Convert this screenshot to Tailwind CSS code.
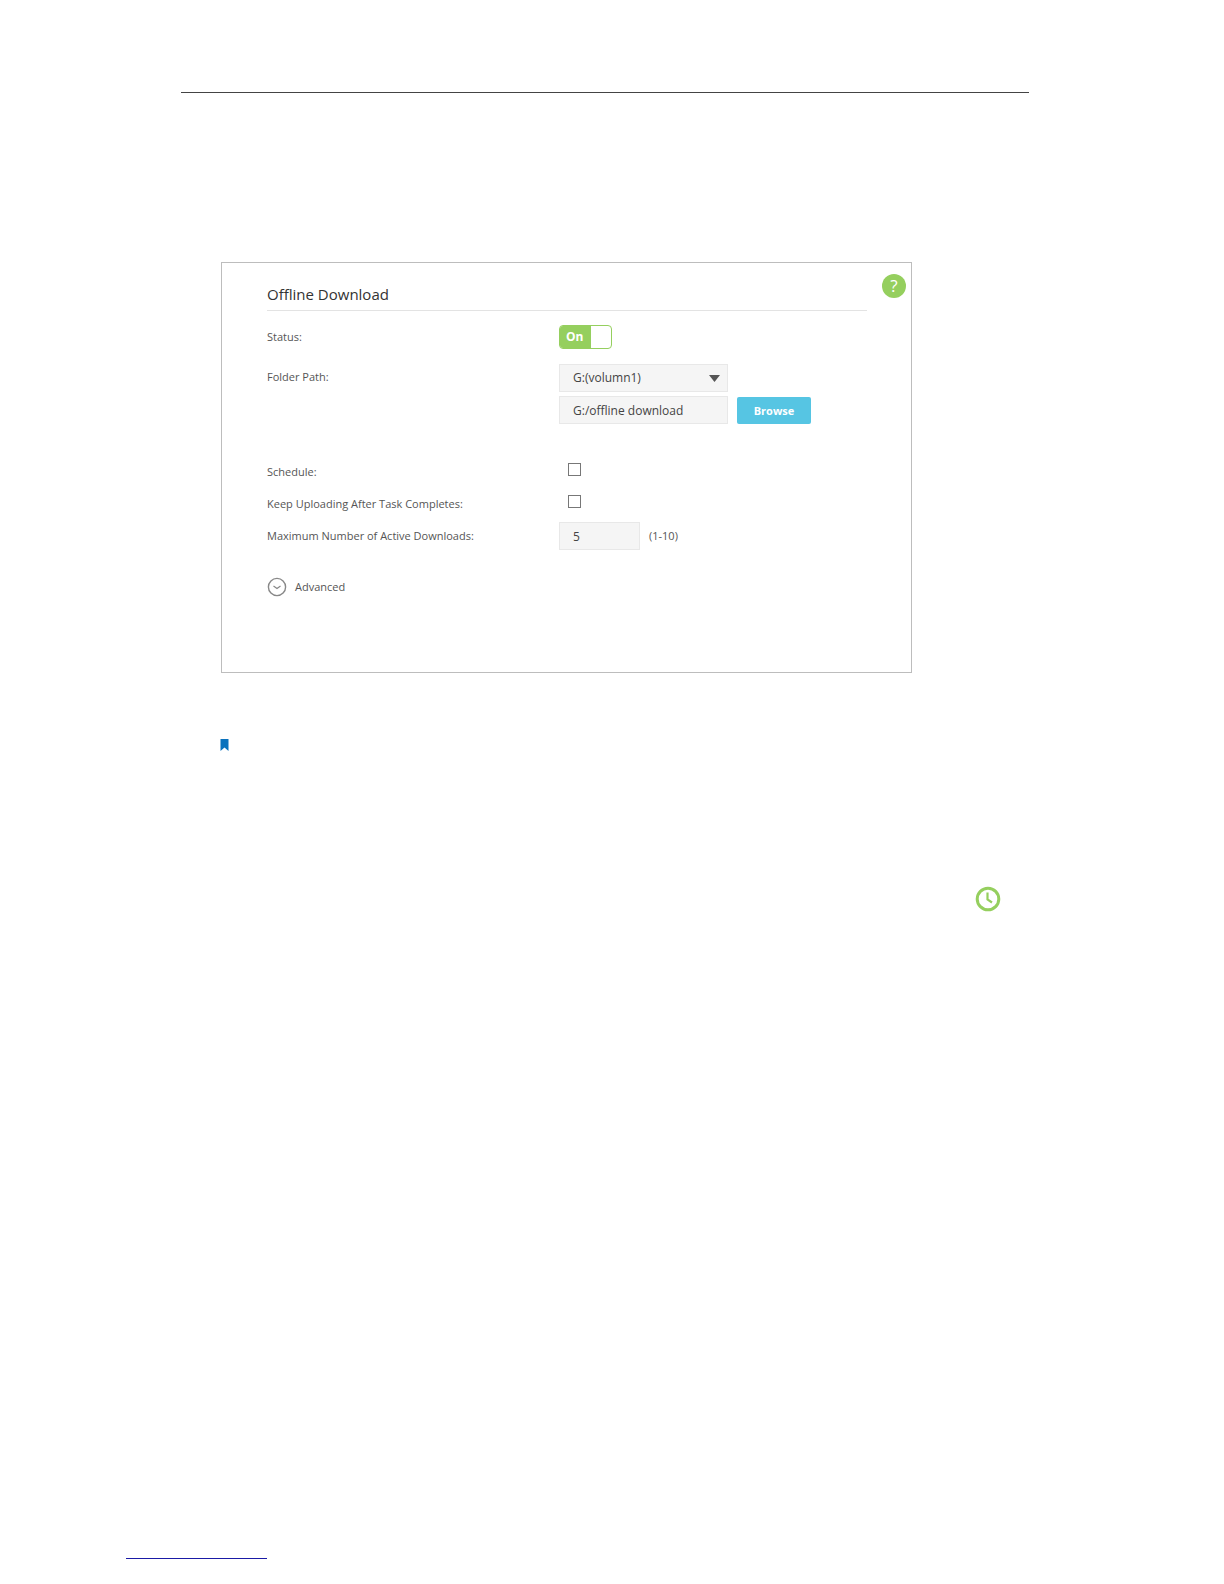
<!DOCTYPE html>
<html lang="en">
<head>
    <meta charset="UTF-8">
    <title>Offline Download</title>
    <script src="https://cdn.jsdelivr.net/npm/@tailwindcss/browser@4"></script>
</head>
<body class="bg-white h-[1584px] overflow-hidden font-['Open_Sans','Noto_Sans',sans-serif] text-[#555]">
    <div class="pt-[92px] pl-[181px]">
        <!-- Header rule -->
        <div class="w-[848px] h-px bg-[#444]"></div>

        <!-- Settings panel -->
        <div class="relative ml-[40px] mt-[169px] w-[691px] h-[411px] border border-[#bdbdbd] pl-[45px] pt-[19px]">
            <div class="absolute right-[5px] top-[11px] w-[24px] h-[24px] rounded-full bg-[#95cf5e] text-white text-[17px] leading-[24px] text-center">?</div>

            <div class="w-[600px] h-[29px] border-b border-[#e3e3e3] text-[15px] leading-[24px] text-[#333]">Offline Download</div>

            <div class="flex items-center mt-[14px] h-[24px] text-[11px]">
                <div class="w-[292px]">Status:</div>
                <div class="flex w-[53px] h-[24px] rounded-[4px] border border-[#95cf5e] overflow-hidden">
                    <div class="w-[31px] bg-[#95cf5e] text-white font-bold text-[12px] leading-[22px] pl-[6px]">On</div>
                </div>
            </div>

            <div class="flex mt-[15px] text-[11px]">
                <div class="w-[292px] pt-[5px]">Folder Path:</div>
                <div class="flex flex-col gap-[4px]">
                    <div class="flex items-center justify-between w-[169px] h-[28px] bg-[#f5f5f5] border border-[#e8e8e8] pl-[13px] pr-[7px] text-[12px] text-[#444]">
                        G:(volumn1)
                        <svg width="11" height="7" viewBox="0 0 11 7"><path d="M0 0h11L5.500 7z" fill="#555"/></svg>
                    </div>
                    <div class="flex items-center gap-[9px]">
                        <div class="w-[169px] h-[28px] bg-[#f5f5f5] border border-[#e8e8e8] pl-[13px] text-[12px] leading-[27px] text-[#444]">G:/offline download</div>
                        <div class="w-[74px] h-[27px] rounded-[2px] bg-[#56c5e3] text-white font-bold text-[11px] leading-[27px] text-center">Browse</div>
                    </div>
                </div>
            </div>

            <div class="flex items-center mt-[36px] h-[24px] text-[11px]">
                <div class="w-[292px]">Schedule:</div>
                <div class="ml-[9px] mb-[6px] w-[13px] h-[13px] border border-[#777] bg-white"></div>
            </div>
            <div class="flex items-center mt-[8px] h-[24px] text-[11px]">
                <div class="w-[292px]">Keep Uploading After Task Completes:</div>
                <div class="ml-[9px] mb-[6px] w-[13px] h-[13px] border border-[#777] bg-white"></div>
            </div>
            <div class="flex items-center mt-[6px] h-[28px] text-[11px]">
                <div class="w-[292px]">Maximum Number of Active Downloads:</div>
                <div class="w-[81px] h-[28px] bg-[#f5f5f5] border border-[#e8e8e8] pl-[13px] text-[12px] leading-[27px] text-[#444]">5</div>
                <div class="ml-[9px]">(1-10)</div>
            </div>

            <div class="flex items-center gap-[8px] mt-[27px] text-[11px]">
                <svg width="20" height="20" viewBox="0 0 20 20" fill="none" stroke="#888"><circle cx="10" cy="10" r="8.600" stroke-width="1.400"/><path d="M6.500 9l3.500 2.500L13.500 9" stroke-width="1.200"/></svg>
                Advanced
            </div>
        </div>

        <!-- Note bookmark -->
        <svg class="ml-[39px] mt-[66px]" width="9" height="12" viewBox="0 0 9 12"><path d="M0.500 0h8v12L4.500 8.500 0.500 12z" fill="#0a72bd"/></svg>

        <!-- Clock icon -->
        <svg class="ml-[794px] mt-[135px]" width="26" height="26" viewBox="0 0 26 26" fill="none" stroke="#95cf5e"><circle cx="13" cy="13" r="10.800" stroke-width="3"/><path d="M12.500 6.500v7l4.500 3" stroke-width="2.200"/></svg>
    </div>
    <!-- Footer rule -->
    <div class="absolute left-[126px] top-[1558px] w-[141px] h-px bg-[#1a1aa6]"></div>
</body>
</html>
